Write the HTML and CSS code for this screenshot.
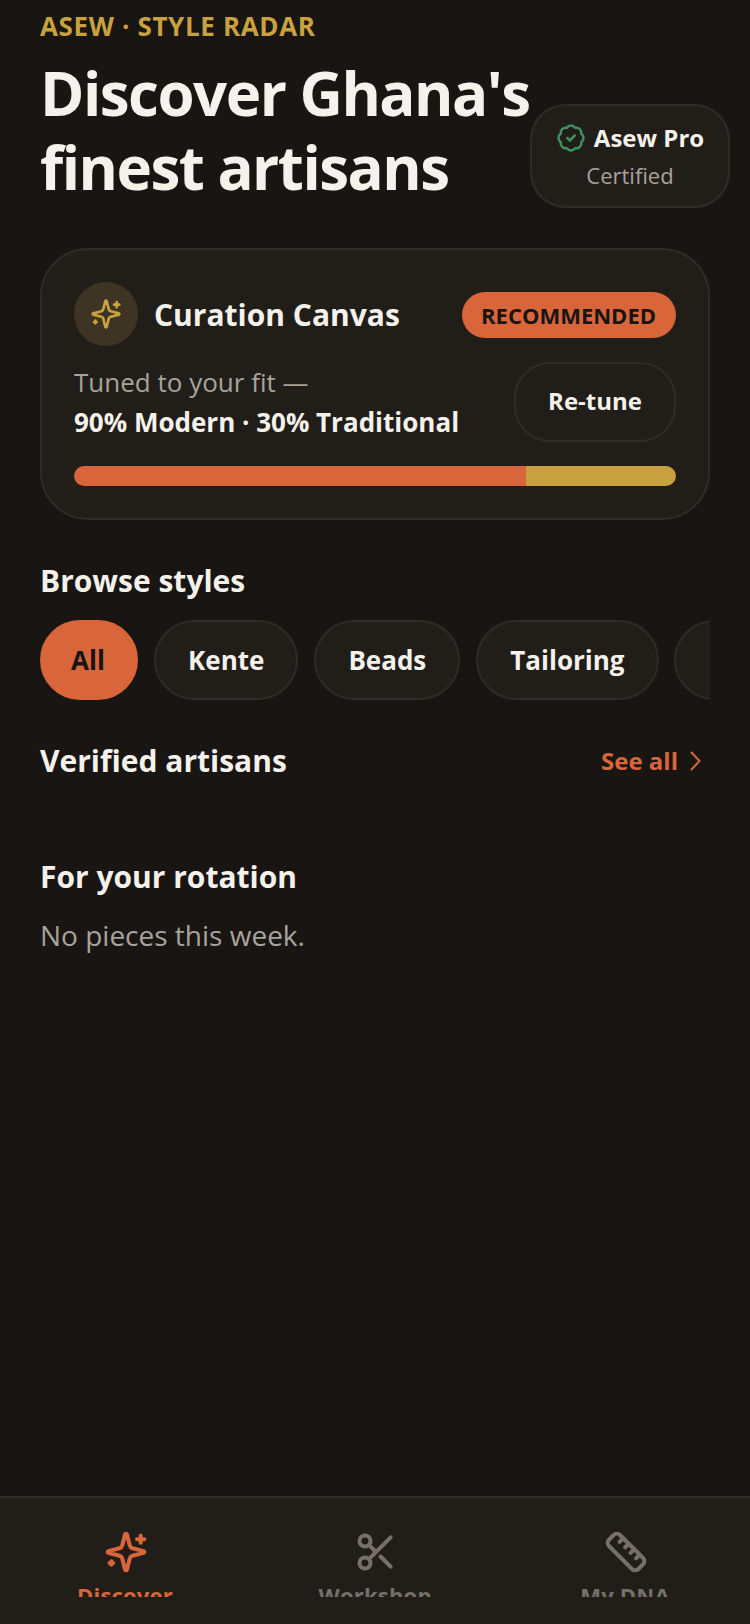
FILE: index.html
```html
<!DOCTYPE html>
<html lang="en">
<head>
  <meta charset="UTF-8" />
  <meta name="viewport" content="width=device-width, initial-scale=1.0"/>
  <title>Asew Style Radar</title>
  <link rel="stylesheet" href="styles.css">
</head>
<body>
  <main class="page">
    <header class="top">
      <div class="top-text">
        <p class="eyebrow">ASEW · STYLE RADAR</p>
        <h1>Discover Ghana's<br>finest artisans</h1>
      </div>
      <div class="pro-badge">
        <div class="pro-line">
          <svg class="pro-icon" viewBox="0 0 24 24" fill="none" stroke="#3f8f5f" stroke-width="2" stroke-linecap="round" stroke-linejoin="round">
            <path d="M3.85 8.62a4 4 0 0 1 4.78-4.77 4 4 0 0 1 6.74 0 4 4 0 0 1 4.78 4.78 4 4 0 0 1 0 6.74 4 4 0 0 1-4.77 4.78 4 4 0 0 1-6.75 0 4 4 0 0 1-4.78-4.77 4 4 0 0 1 0-6.76Z"/>
            <path d="m9 12 2 2 4-4"/>
          </svg>
          <span class="pro-name">Asew Pro</span>
        </div>
        <span class="pro-sub">Certified</span>
      </div>
    </header>

    <section class="canvas-card">
      <div class="canvas-head">
        <div class="canvas-title">
          <span class="spark-wrap">
            <svg class="spark" viewBox="0 0 24 24" fill="none" stroke="#c9a13f" stroke-width="2" stroke-linecap="round" stroke-linejoin="round">
              <path d="M9.937 15.5A2 2 0 0 0 8.5 14.063l-6.135-1.582a.5.5 0 0 1 0-.962L8.5 9.936A2 2 0 0 0 9.937 8.5l1.582-6.135a.5.5 0 0 1 .963 0L14.063 8.5A2 2 0 0 0 15.5 9.937l6.135 1.581a.5.5 0 0 1 0 .964L15.5 14.063a2 2 0 0 0-1.437 1.437l-1.582 6.135a.5.5 0 0 1-.963 0z"/>
              <path d="M20 3v4M22 5h-4M4 17v2M5 18H3"/>
            </svg>
          </span>
          <h2>Curation Canvas</h2>
        </div>
        <span class="tag">RECOMMENDED</span>
      </div>
      <div class="canvas-body">
        <div>
          <p class="tuned">Tuned to your fit —</p>
          <p class="mix">90% Modern · 30% Traditional</p>
        </div>
        <button class="retune">Re-tune</button>
      </div>
      <div class="bar">
        <div class="bar-modern"></div>
        <div class="bar-trad"></div>
      </div>
    </section>

    <section class="browse">
      <h3>Browse styles</h3>
      <div class="pills">
        <span class="pill active">All</span>
        <span class="pill">Kente</span>
        <span class="pill">Beads</span>
        <span class="pill">Tailoring</span>
        <span class="pill pill-next"></span>
      </div>
    </section>

    <section class="verified">
      <h3>Verified artisans</h3>
      <a class="see-all">See all
        <svg viewBox="0 0 24 24" fill="none" stroke="#d9653a" stroke-width="2" stroke-linecap="round" stroke-linejoin="round"><path d="M8.500 3.500l8 8.500-8 8.500"/></svg>
      </a>
    </section>

    <section class="rotation">
      <h3>For your rotation</h3>
      <p class="empty">No pieces this week.</p>
    </section>
  </main>

  <nav class="tabs">
    <div class="tab current">
      <svg viewBox="0 0 24 24" fill="none" stroke="#d9653a" stroke-width="2.200" stroke-linecap="round" stroke-linejoin="round">
        <path d="M9.937 15.5A2 2 0 0 0 8.5 14.063l-6.135-1.582a.5.5 0 0 1 0-.962L8.5 9.936A2 2 0 0 0 9.937 8.5l1.582-6.135a.5.5 0 0 1 .963 0L14.063 8.5A2 2 0 0 0 15.5 9.937l6.135 1.581a.5.5 0 0 1 0 .964L15.5 14.063a2 2 0 0 0-1.437 1.437l-1.582 6.135a.5.5 0 0 1-.963 0z"/>
        <path d="M20 3v4M22 5h-4M4 17v2M5 18H3"/>
      </svg>
      <span>Discover</span>
    </div>
    <div class="tab">
      <svg viewBox="0 0 24 24" fill="none" stroke="#75706a" stroke-width="2.200" stroke-linecap="round" stroke-linejoin="round">
        <circle cx="6" cy="6" r="3"/>
        <circle cx="6" cy="18" r="3"/>
        <path d="M20 4 8.120 15.880M14.470 14.480 20 20M8.120 8.120 12 12"/>
      </svg>
      <span>Workshop</span>
    </div>
    <div class="tab">
      <svg viewBox="0 0 24 24" fill="none" stroke="#75706a" stroke-width="2.200" stroke-linecap="round" stroke-linejoin="round">
        <path d="M21.300 15.300a2.400 2.400 0 0 1 0 3.400l-2.600 2.600a2.400 2.400 0 0 1-3.400 0L2.700 8.700a2.410 2.410 0 0 1 0-3.400l2.600-2.600a2.410 2.410 0 0 1 3.400 0Z"/>
        <path d="m14.500 12.500 2-2M11.500 9.500l2-2M8.500 6.500l2-2M17.500 15.500l2-2"/>
      </svg>
      <span>My DNA</span>
    </div>
  </nav>
</body>
</html>
```

FILE: styles.css
```css
* { box-sizing: border-box; }
html, body { margin: 0; }
body {
  width: 750px;
  height: 1624px;
  overflow: hidden;
  background-color: #181512;
  color: #f5f1eb;
  font-family: "Open Sans", sans-serif;
  display: flex;
  flex-direction: column;
}
p, h1, h2, h3 { margin: 0; }

.page {
  flex: 1;
  min-height: 0;
  padding: 8px 40px 0;
}

.top {
  display: flex;
  align-items: flex-end;
  width: 690px;
}
.top-text { flex: none; width: 490px; }
.eyebrow {
  color: #c9a13f;
  font-size: 26px;
  font-weight: 700;
  letter-spacing: 0.65px;
  line-height: 36px;
}
h1 {
  font-size: 60px;
  font-weight: 700;
  letter-spacing: -1.5px;
  line-height: 74px;
  margin-top: 12px;
  white-space: nowrap;
}
.pro-badge {
  flex: none;
  width: 200px;
  height: 104px;
  margin-bottom: -4px;
  background-color: #211e1a;
  border: 2px solid #2f2c28;
  border-radius: 36px;
  display: flex;
  flex-direction: column;
  align-items: center;
  justify-content: center;
}
.pro-line { display: flex; align-items: center; gap: 8px; }
.pro-icon { width: 30px; height: 30px; }
.pro-name { font-size: 24px; font-weight: 700; line-height: 36px; }
.pro-sub { font-size: 22px; color: #a8a39b; line-height: 34px; padding-top: 2px; }

.canvas-card {
  margin-top: 44px;
  height: 272px;
  padding: 32px 32px 0;
  background-color: #211e1a;
  border: 2px solid #2f2c28;
  border-radius: 48px;
}
.canvas-head {
  display: flex;
  align-items: center;
  justify-content: space-between;
}
.canvas-title { display: flex; align-items: center; gap: 16px; }
.spark-wrap {
  width: 64px;
  height: 64px;
  border-radius: 50%;
  background-color: #3d3424;
  display: flex;
  align-items: center;
  justify-content: center;
}
.spark { width: 32px; height: 32px; }
h2 { font-size: 30px; font-weight: 700; line-height: 40px; margin-top: 2px; }
.tag {
  margin-top: 2px;
  background-color: #d9653a;
  color: #181512;
  font-size: 22px;
  font-weight: 700;
  line-height: 46px;
  padding: 0 20px 0 19px;
  border-radius: 24px;
}
.canvas-body {
  display: flex;
  align-items: center;
  justify-content: space-between;
  margin-top: 16px;
}
.tuned { color: #a8a39b; font-size: 26px; line-height: 40px; }
.mix { font-size: 26px; font-weight: 700; line-height: 40px; }
.retune {
  width: 162px;
  height: 80px;
  padding: 0 0 4px;
  background: none;
  color: #f5f1eb;
  border: 2px solid #2f2c28;
  border-radius: 36px;
  font-family: inherit;
  font-size: 24px;
  font-weight: 700;
}
.bar {
  display: flex;
  height: 20px;
  margin-top: 24px;
  border-radius: 10px;
  overflow: hidden;
}
.bar-modern { width: 75%; background-color: #d9653a; }
.bar-trad { width: 25%; background-color: #c9a13f; }

h3 { font-size: 30px; font-weight: 700; line-height: 40px; }
.browse { margin-top: 41px; }
.pills {
  display: flex;
  gap: 16px;
  margin-top: 19px;
  overflow: hidden;
}
.pill {
  flex: none;
  height: 80px;
  padding: 0 32px;
  background-color: #211e1a;
  border: 2px solid #2f2c28;
  border-radius: 40px;
  font-size: 26px;
  font-weight: 700;
  line-height: 76px;
}
.pill.active {
  width: 98px;
  padding: 0 2px 0 0;
  text-align: center;
  background-color: #d9653a;
  border-color: #d9653a;
  color: #181512;
}
.pill-next { width: 140px; margin-left: -1px; }
.verified {
  display: flex;
  align-items: center;
  justify-content: space-between;
  margin-top: 41px;
}
.see-all {
  display: flex;
  align-items: center;
  gap: 5px;
  padding-right: 3px;
  margin-top: -1px;
  color: #d9653a;
  font-size: 24px;
  font-weight: 700;
}
.see-all svg { width: 24px; height: 24px; }
.rotation { margin-top: 76px; }
.empty { color: #a8a39b; font-size: 28px; line-height: 40px; margin-top: 18px; }

.tabs {
  flex: none;
  height: 128px;
  background-color: #211e1a;
  border-top: 2px solid #2f2c28;
  display: flex;
  padding: 32px 0 0 0;
}
.tab {
  flex: 1;
  height: 67px;
  overflow: hidden;
  display: flex;
  flex-direction: column;
  align-items: center;
  justify-content: flex-start;
  color: #75706a;
  font-size: 22px;
  font-weight: 700;
  letter-spacing: 0.2px;
  line-height: 34px;
  gap: 4px;
}
.tab.current { color: #d9653a; }
.tab svg { flex: none; width: 44px; height: 44px; margin-left: 2px; }
.tab span { flex: none; }
```
